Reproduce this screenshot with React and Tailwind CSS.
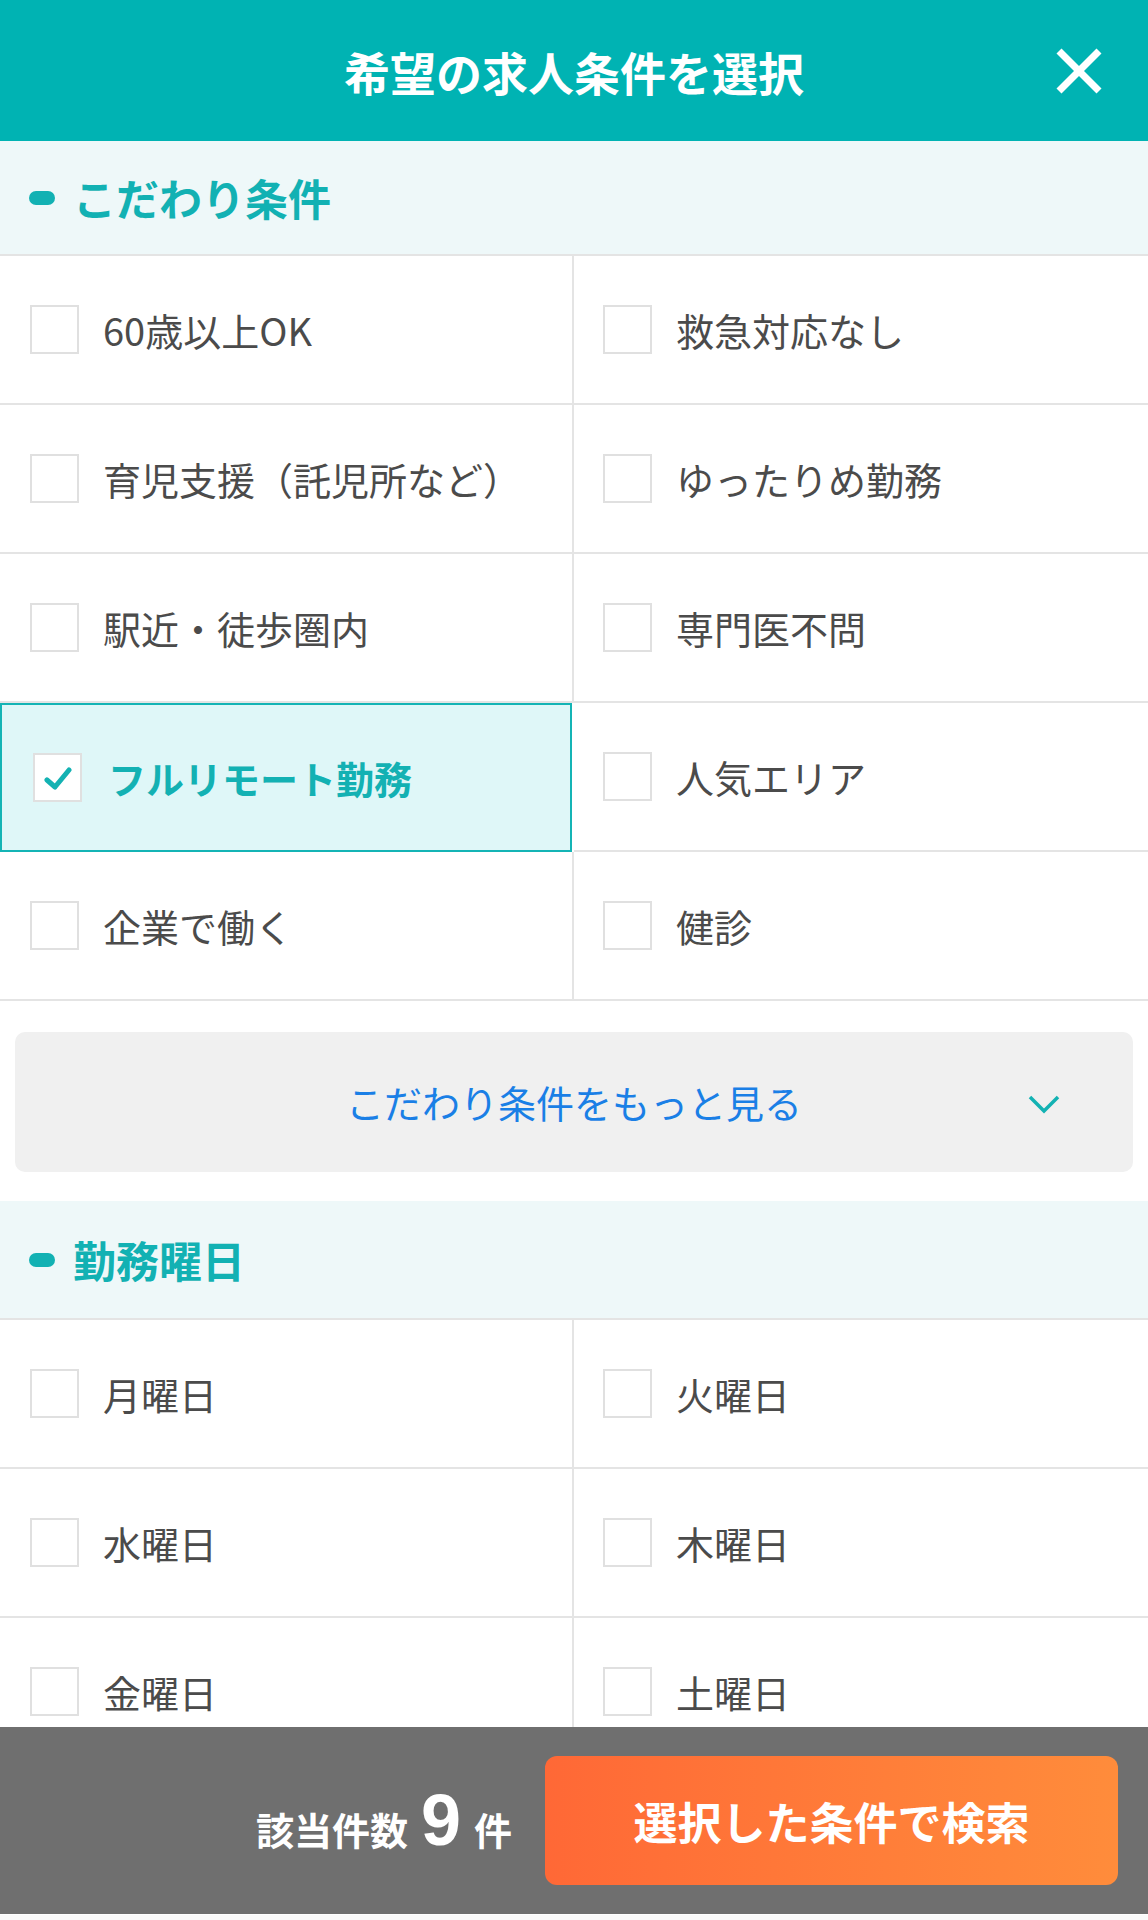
import { useState } from "react"

const kodawari = [
  "60歳以上OK",
  "救急対応なし",
  "育児支援（託児所など）",
  "ゆったりめ勤務",
  "駅近・徒歩圏内",
  "専門医不問",
  "フルリモート勤務",
  "人気エリア",
  "企業で働く",
  "健診",
]

const days = ["月曜日", "火曜日", "水曜日", "木曜日", "金曜日", "土曜日"]

function SectionHeader({ title, height }) {
  return (
    <div className={`${height} flex items-center gap-[18px] pl-[29px] bg-[#eef8f9] border-b-2 border-[#e4e4e4]`}>
      <span className="w-[26px] h-[14px] rounded-full bg-[#12b1b3]" />
      <span className="text-[43px] font-bold text-[#12b1b3] leading-none">{title}</span>
    </div>
  )
}

function CheckCell({ label, checked, right, onToggle }) {
  if (checked) {
    return (
      <button
        type="button"
        onClick={onToggle}
        className="h-[149px] flex items-center pl-[31px] border-2 border-[#14b4b5] bg-[#dff7f8] mr-[2px] text-left"
      >
        <span className="w-[49px] h-[49px] shrink-0 border-2 border-[#e0e0e0] bg-white flex items-center justify-center">
          <svg width="30" height="24" viewBox="0 0 30 24">
            <polyline points="4,14 12,21 26,4" fill="none" stroke="#13b2b3" strokeWidth="5" strokeLinecap="round" strokeLinejoin="round" />
          </svg>
        </span>
        <span className="ml-[26px] text-[38px] font-bold text-[#13b1b3] leading-none">{label}</span>
      </button>
    )
  }
  return (
    <button
      type="button"
      onClick={onToggle}
      className={`h-[149px] flex items-center border-b-2 border-[#e4e4e4] text-left ${right ? "pl-[29px]" : "pl-[30px] border-r-2"}`}
    >
      <span className="w-[49px] h-[49px] shrink-0 border-2 border-[#e0e0e0] bg-white" />
      <span className="ml-[24px] text-[38px] text-[#4b4b4b] leading-none">{label}</span>
    </button>
  )
}

export default function App() {
  const [selected, setSelected] = useState(["フルリモート勤務"])

  const toggle = (label) => {
    setSelected((prev) => (prev.includes(label) ? prev.filter((l) => l !== label) : [...prev, label]))
  }

  return (
    <div
      className="w-[1148px] h-[1920px] flex flex-col bg-[#fafafa] overflow-hidden"
      style={{ fontFamily: '"Noto Sans CJK JP", "Noto Sans", sans-serif' }}
    >
      <header className="h-[141px] shrink-0 bg-[#00b3b3] grid grid-cols-[1fr_auto_1fr] items-center">
        <div />
        <h1 className="text-[46px] font-bold text-white leading-none">希望の求人条件を選択</h1>
        <div className="flex justify-end pr-[44px]">
          <svg width="50" height="50" viewBox="0 0 50 50">
            <line x1="5" y1="5" x2="45" y2="45" stroke="white" strokeWidth="7" />
            <line x1="45" y1="5" x2="5" y2="45" stroke="white" strokeWidth="7" />
          </svg>
        </div>
      </header>

      <main className="flex-1 overflow-hidden bg-white">
        <SectionHeader title="こだわり条件" height="h-[115px]" />
        <div className="grid grid-cols-2">
          {kodawari.map((label, i) => (
            <CheckCell
              key={label}
              label={label}
              right={i % 2 === 1}
              checked={selected.includes(label)}
              onToggle={() => toggle(label)}
            />
          ))}
        </div>

        <div className="px-[15px] pt-[31px] pb-[29px]">
          <button
            type="button"
            className="w-full h-[140px] rounded-[10px] bg-[#f0f0f0] relative flex items-center justify-center"
          >
            <span className="text-[38px] text-[#1a7fe6] leading-none">こだわり条件をもっと見る</span>
            <svg className="absolute right-[73px] top-[62px]" width="32" height="20" viewBox="0 0 32 20">
              <polyline points="2,3 16,17 30,3" fill="none" stroke="#13b2b3" strokeWidth="3.5" />
            </svg>
          </button>
        </div>

        <SectionHeader title="勤務曜日" height="h-[119px]" />
        <div className="grid grid-cols-2">
          {days.map((label, i) => (
            <CheckCell
              key={label}
              label={label}
              right={i % 2 === 1}
              checked={selected.includes(label)}
              onToggle={() => toggle(label)}
            />
          ))}
        </div>
      </main>

      <footer className="h-[187px] shrink-0 bg-[#6f6f6f] flex items-center justify-end pr-[30px]">
        <div className="flex items-baseline text-white font-bold mr-[33px]">
          <span className="text-[38px]">該当件数</span>
          <span className="text-[72px] mx-[13px] leading-none" style={{ fontFamily: '"Liberation Sans", Arial, sans-serif' }}>
            9
          </span>
          <span className="text-[38px]">件</span>
        </div>
        <button
          type="button"
          className="w-[573px] h-[129px] rounded-[12px] bg-gradient-to-r from-[#ff6836] to-[#ff8c3b] text-white text-[44px] font-bold"
        >
          選択した条件で検索
        </button>
      </footer>
      <div className="h-[6px] shrink-0 bg-[#fafafa] border-t border-white" />
    </div>
  )
}
